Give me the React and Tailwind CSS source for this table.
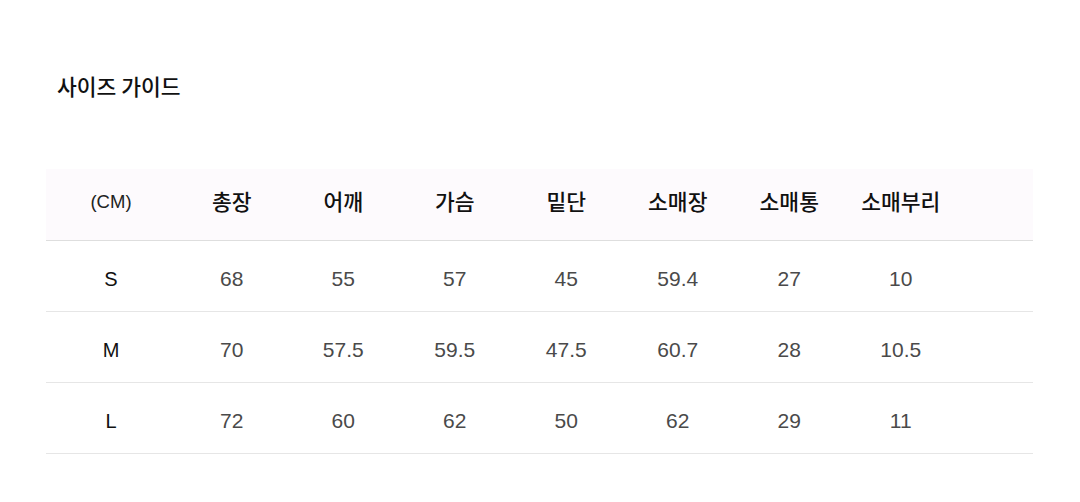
import React from "react";

const headers = ["(CM)", "총장", "어깨", "가슴", "밑단", "소매장", "소매통", "소매부리"];

const rows = [
  ["S", "68", "55", "57", "45", "59.4", "27", "10"],
  ["M", "70", "57.5", "59.5", "47.5", "60.7", "28", "10.5"],
  ["L", "72", "60", "62", "50", "62", "29", "11"],
];

const gridCols = "grid grid-cols-[130px_repeat(7,111.5px)_1fr]";

const App = () => {
  return (
    <div
      className="w-[1080px] h-[502px] bg-white pt-[71px] px-[46px]"
      style={{ fontFamily: '"Noto Sans CJK KR", "Liberation Sans", sans-serif' }}
    >
      <h2 className="pl-[11px] text-[21.5px] leading-[30px] font-medium text-[#111]">사이즈 가이드</h2>

      <div className="mt-[68px] w-[987px]">
        <div className={`${gridCols} h-[72px] pb-[6px] bg-[#fdfafd] border-b border-[#dedede] items-center`}>
          {headers.map((h, i) => (
            <div
              key={h}
              className={
                i === 0
                  ? "text-center text-[18.5px] text-[#222] font-['Liberation_Sans',sans-serif]"
                  : "text-center text-[21.5px] font-medium text-[#111]"
              }
            >
              {h}
            </div>
          ))}
        </div>

        {rows.map((r) => (
          <div key={r[0]} className={`${gridCols} h-[71px] pt-[5px] border-b border-[#e6e6e6] items-center`}>
            {r.map((v, i) => (
              <div
                key={i}
                className={
                  i === 0
                    ? "text-center text-[20px] text-[#111] font-['Liberation_Sans',sans-serif]"
                    : "text-center text-[21px] text-[#4a4a4a] font-['Liberation_Sans',sans-serif]"
                }
              >
                {v}
              </div>
            ))}
          </div>
        ))}
      </div>
    </div>
  );
};

export default App;
